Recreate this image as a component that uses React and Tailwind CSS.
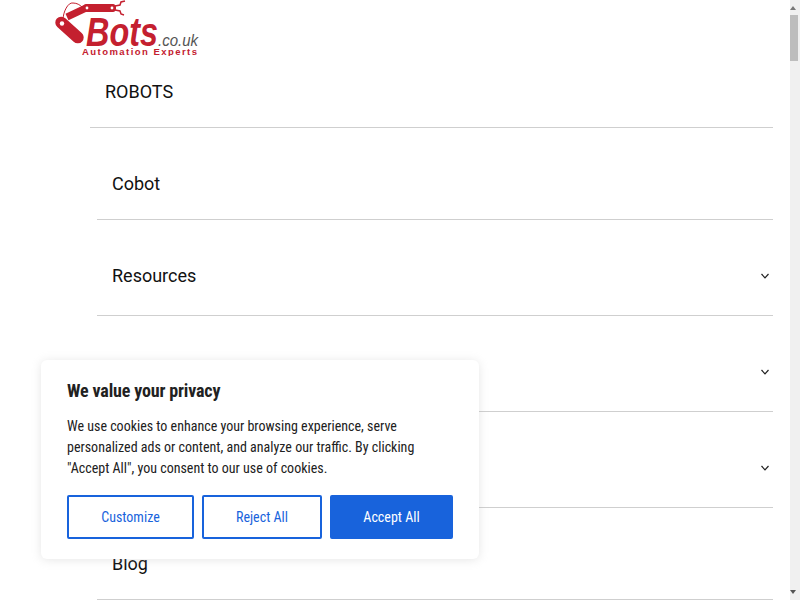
const ROW_FONT = { fontFamily: 'Roboto, sans-serif' };

function Logo() {
  return (
    <svg width="150" height="56" viewBox="0 0 150 56" className="block">
      <path d="M8 20 C8 12 13 2 18 3 C22 3 25 5 27 7" fill="none" stroke="#c4202f" strokeWidth="1" />
      <path d="M12 17 L31 8" fill="none" stroke="#c4202f" strokeWidth="7" />
      <rect x="28.5" y="4.5" width="32" height="7" rx="2.5" fill="#c4202f" stroke="#c4202f" />
      <circle cx="32" cy="8" r="1.4" fill="#fff" />
      <circle cx="57" cy="8" r="1.4" fill="#fff" />
      <path d="M60 6 L65 5 L66 2 L70 1 M60 10 L65 11 L66 14 L69 15" fill="none" stroke="#c4202f" strokeWidth="1.5" />
      <rect x="-2.5" y="24" width="34" height="12" rx="6" transform="rotate(42 14.5 30)" fill="#c4202f" />
      <circle cx="7" cy="23.5" r="2.2" fill="#fff" />
      <text x="31" y="46" fontFamily="Liberation Sans, sans-serif" fontWeight="700" fontStyle="italic" fontSize="41" fill="#c4202f" textLength="72" lengthAdjust="spacingAndGlyphs">Bots</text>
      <text x="103" y="46" fontFamily="Liberation Sans, sans-serif" fontStyle="italic" fontSize="16" fill="#555" textLength="40" lengthAdjust="spacingAndGlyphs">.co.uk</text>
      <text x="27" y="55" fontFamily="Liberation Sans, sans-serif" fontWeight="700" fontSize="9.5" fill="#c4202f" textLength="115" lengthAdjust="spacing">Automation Experts</text>
    </svg>
  );
}

function Chevron() {
  return (
    <svg width="10" height="10" viewBox="0 0 10 10" fill="none" stroke="#222" strokeWidth="1.2" className="mb-[7px]">
      <path d="M1.5 3 L5 6.8 L8.5 3" />
    </svg>
  );
}

function Row({ label, tall, chevron }) {
  return (
    <div className={`flex items-end justify-between border-b border-[#cfcfcf] pl-[15px] pr-[3px] text-[18px] leading-[24px] text-[#111] ${tall ? 'h-[96px] pb-[27px]' : 'h-[92px] pb-[23px]'}`}>
      <span>{label}</span>
      {chevron && <Chevron />}
    </div>
  );
}

function Btn({ children, primary, w }) {
  return (
    <button className={`h-[44px] rounded-[2px] border-2 border-[#1863dc] text-[14px] ${w} ${primary ? 'bg-[#1863dc] text-white' : 'bg-white text-[#1863dc]'}`} style={{ fontStretch: '75%' }}>
      {children}
    </button>
  );
}

export default function App() {
  return (
    <div className="relative h-[600px] w-[800px] overflow-hidden bg-white" style={ROW_FONT}>
      <div className="w-[790px]">
        <div className="h-[55px] pl-[55px]"><Logo /></div>
        <div className="ml-[90px] mr-[17px]">
          <div className="flex h-[73px] items-center border-b border-[#cfcfcf] pl-[15px] text-[18px] text-[#111]">ROBOTS</div>
          <div className="ml-[7px]">
            <Row label="Cobot" />
            <Row label="Resources" tall chevron />
            <Row label="" tall chevron />
            <Row label="" tall chevron />
            <Row label="Blog" />
          </div>
        </div>
      </div>

      {/* page scrollbar */}
      <div className="absolute right-0 top-0 flex h-[600px] w-[10px] flex-col bg-[#f0f0f0]">
        <div className="h-[15px]">
          <div className="mt-[6px] h-0 w-0 border-x-[3px] border-b-[4px] border-x-transparent border-b-[#777]" />
        </div>
        <div className="h-[46px] w-[8px] bg-[#bdbdbd]" />
        <div className="mt-auto h-[15px]">
          <div className="mt-[5px] h-0 w-0 border-x-[3px] border-t-[4px] border-x-transparent border-t-[#555]" />
        </div>
      </div>

      {/* cookie consent */}
      <div className="absolute left-[41px] top-[360px] h-[199px] w-[438px] rounded-[6px] bg-white px-[26px] pt-[19px] shadow-[0_1px_10px_0_rgba(172,171,171,0.3)]">
        <div className="text-[18px] font-bold leading-[24px] tracking-[-0.15px] text-[#212121]" style={{ fontStretch: '75%' }}>We value your privacy</div>
        <p className="mt-[13px] text-[14px] leading-[21px] text-[#212121]" style={{ fontStretch: '75%' }}>
          We use cookies to enhance your browsing experience, serve<br />
          personalized ads or content, and analyze our traffic. By clicking<br />
          "Accept All", you consent to our use of cookies.
        </p>
        <div className="mt-[16px] flex gap-[8px]">
          <Btn w="w-[127px]">Customize</Btn>
          <Btn w="w-[120px]">Reject All</Btn>
          <Btn w="w-[123px]" primary>Accept All</Btn>
        </div>
      </div>
    </div>
  );
}
